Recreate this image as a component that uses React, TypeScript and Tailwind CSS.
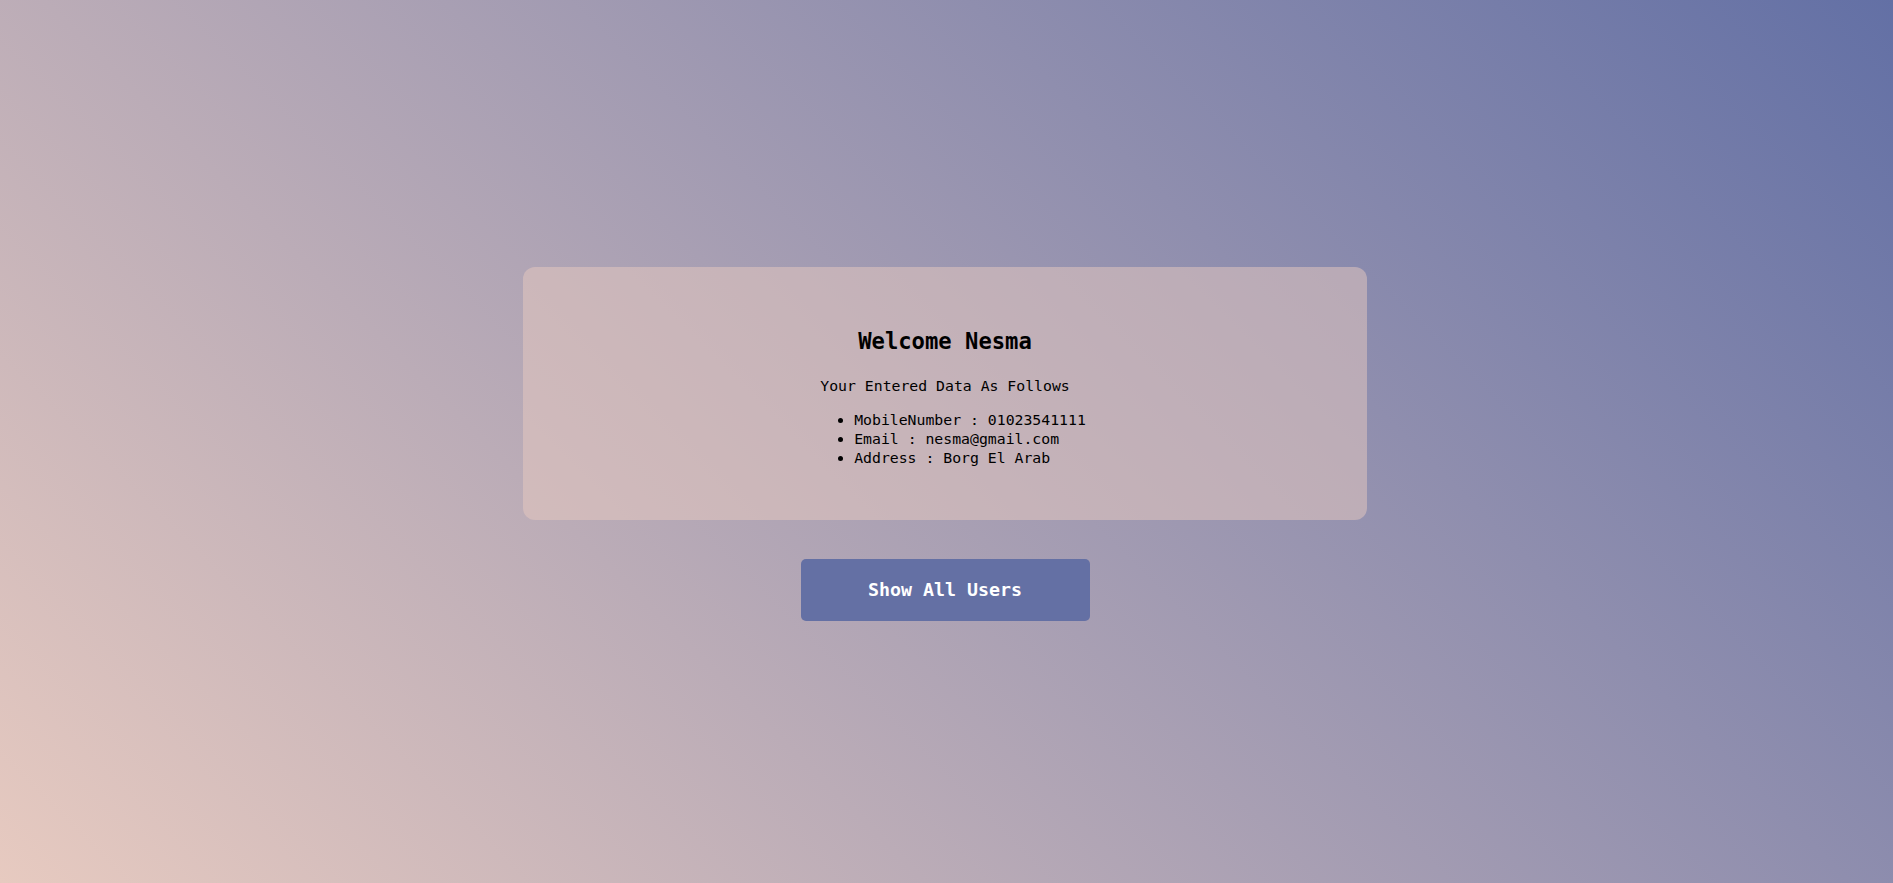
import React from 'react';

const mono = "font-['DejaVu_Sans_Mono','Liberation_Mono',monospace]";

const details = [
  { label: 'MobileNumber', value: '01023541111' },
  { label: 'Email', value: 'nesma@gmail.com' },
  { label: 'Address', value: 'Borg El Arab' },
];

export default function App() {
  return (
    <div
      className={`w-full h-screen pt-[5px] pr-[3px] flex flex-col items-center justify-center bg-[linear-gradient(45deg,#e7cac0,#6370a5)] ${mono}`}
    >
      {/* Welcome card */}
      <div className="w-[844px] rounded-[12px] bg-[#e7cac0]/50 pt-[60px] pb-[53px] text-center text-black">
        <h2 className="text-[22.2px] leading-[29px] font-bold">Welcome Nesma</h2>
        <p className="mt-[20px] text-[14.8px] leading-[19px]">Your Entered Data As Follows</p>
        <ul className="mt-[15px] mx-auto w-fit list-disc pl-[50px] text-left text-[14.8px] leading-[19px]">
          {details.map((d) => (
            <li key={d.label}>
              {d.label} : {d.value}
            </li>
          ))}
        </ul>
      </div>

      <button className="mt-[39px] w-[289px] h-[62px] rounded-[5px] bg-[#6470a4] text-white font-bold text-[18.3px]">
        Show All Users
      </button>
    </div>
  );
}
